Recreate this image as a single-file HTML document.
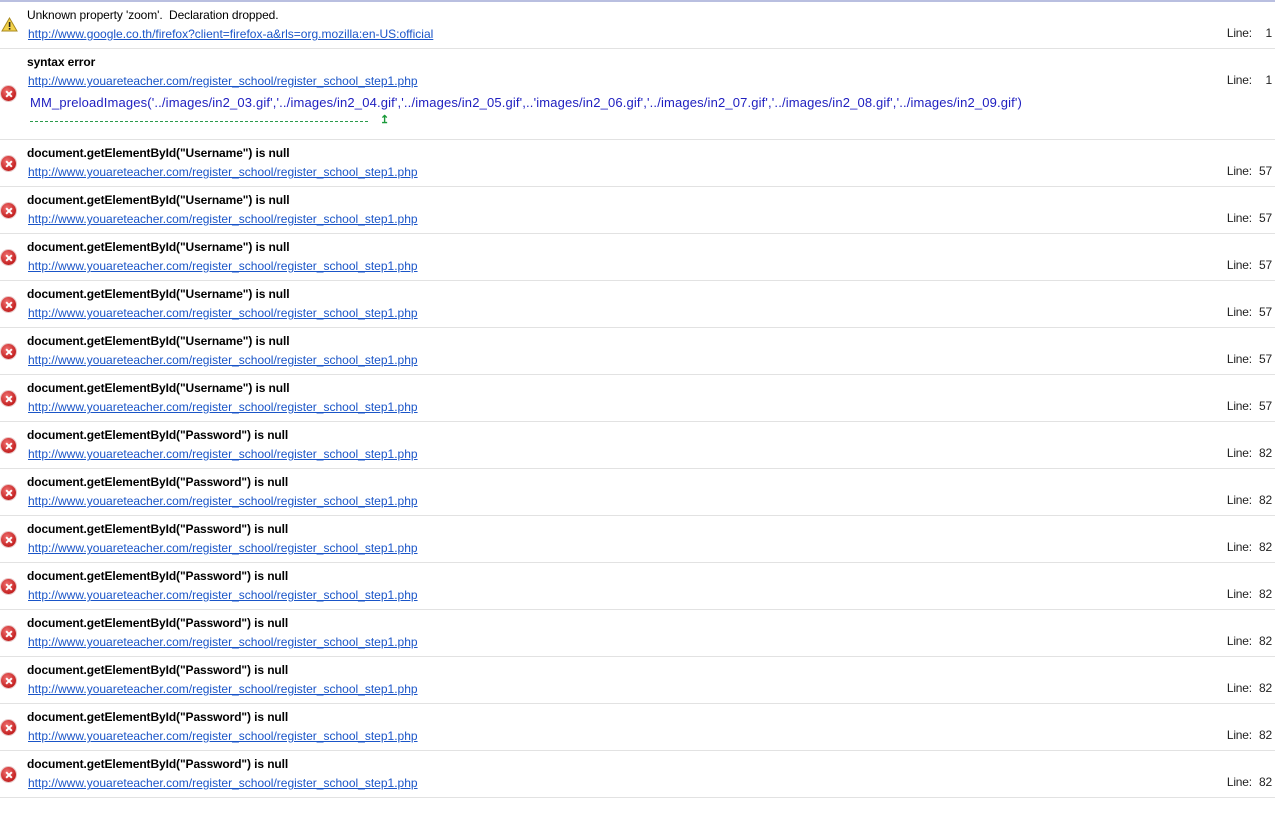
<!DOCTYPE html>
<html><head><meta charset="utf-8"><style>
*{margin:0;padding:0}
body{width:1275px;height:816px;background:#fff;position:relative;overflow:hidden;font-family:"Liberation Sans",Arial,sans-serif;font-size:12px;color:#000}
.top{position:absolute;left:0;top:0;width:1275px;height:2px;background:#b9bfe0}
.row{position:absolute;left:0;width:1275px;border-bottom:1px solid #e2e2e2}
.t{position:absolute;left:27px;white-space:nowrap;letter-spacing:-0.1px}
.b{font-weight:bold}
.a{color:#1a55c8;text-decoration:underline;letter-spacing:0;left:28px}
.ln{position:absolute;right:3px;white-space:nowrap;color:#222;letter-spacing:-0.2px}
.ln span{display:inline-block;width:17px;text-align:right}
.ic{position:absolute;left:1px;width:15px;height:15px;border-radius:50%;background:radial-gradient(circle at 40% 35%,#f07070,#c42020 70%,#a01010);box-shadow:0 0 0 1px #e8c8c8}
.ic:before,.ic:after{content:"";position:absolute;left:6.5px;top:3.5px;width:2px;height:8px;background:#fff;transform:rotate(45deg)}
.ic:after{transform:rotate(-45deg)}
</style></head><body>
<div class="top"></div>

<div class="row" style="top:2px;height:46px">
<svg style="position:absolute;left:1px;top:15px" width="17" height="15" viewBox="0 0 17 15"><path d="M8.5 1 L16 14 L1 14 Z" fill="#f3d24a" stroke="#a88a20" stroke-width="1"/><rect x="7.8" y="5" width="1.6" height="5" fill="#222"/><rect x="7.8" y="11" width="1.6" height="1.6" fill="#222"/></svg>
<div class="t" style="top:6px">Unknown property 'zoom'.&nbsp; Declaration dropped.</div>
<div class="t a" style="top:25px">http://www.google.co.th/firefox?client=firefox-a&amp;rls=org.mozilla:en-US:official</div>
<div class="ln" style="top:24px">Line: <span>1</span></div>
</div>

<div class="row" style="top:49px;height:90px">
<div class="ic" style="top:37px"></div>
<div class="t b" style="top:6px">syntax error</div>
<div class="t a" style="top:25px">http://www.youareteacher.com/register_school/register_school_step1.php</div>
<div class="t" style="top:46px;left:30px;color:#2020c0;font-size:13px;letter-spacing:0.15px">MM_preloadImages('../images/in2_03.gif','../images/in2_04.gif','../images/in2_05.gif',..'images/in2_06.gif','../images/in2_07.gif','../images/in2_08.gif','../images/in2_09.gif')</div>
<div style="position:absolute;left:30px;top:72px;width:338px;border-top:1px dashed #2a9a4a"></div>
<div style="position:absolute;left:380px;top:64px;color:#1a9a3a;font-size:11px;font-weight:bold">&#8613;</div>
<div class="ln" style="top:24px">Line: <span>1</span></div>
</div>

<div class="row" style="top:140px;height:46px"><div class="ic" style="top:16px"></div><div class="t b" style="top:6px">document.getElementById("Username") is null</div><div class="t a" style="top:25px">http://www.youareteacher.com/register_school/register_school_step1.php</div><div class="ln" style="top:24px">Line: <span>57</span></div></div>
<div class="row" style="top:187px;height:46px"><div class="ic" style="top:16px"></div><div class="t b" style="top:6px">document.getElementById("Username") is null</div><div class="t a" style="top:25px">http://www.youareteacher.com/register_school/register_school_step1.php</div><div class="ln" style="top:24px">Line: <span>57</span></div></div>
<div class="row" style="top:234px;height:46px"><div class="ic" style="top:16px"></div><div class="t b" style="top:6px">document.getElementById("Username") is null</div><div class="t a" style="top:25px">http://www.youareteacher.com/register_school/register_school_step1.php</div><div class="ln" style="top:24px">Line: <span>57</span></div></div>
<div class="row" style="top:281px;height:46px"><div class="ic" style="top:16px"></div><div class="t b" style="top:6px">document.getElementById("Username") is null</div><div class="t a" style="top:25px">http://www.youareteacher.com/register_school/register_school_step1.php</div><div class="ln" style="top:24px">Line: <span>57</span></div></div>
<div class="row" style="top:328px;height:46px"><div class="ic" style="top:16px"></div><div class="t b" style="top:6px">document.getElementById("Username") is null</div><div class="t a" style="top:25px">http://www.youareteacher.com/register_school/register_school_step1.php</div><div class="ln" style="top:24px">Line: <span>57</span></div></div>
<div class="row" style="top:375px;height:46px"><div class="ic" style="top:16px"></div><div class="t b" style="top:6px">document.getElementById("Username") is null</div><div class="t a" style="top:25px">http://www.youareteacher.com/register_school/register_school_step1.php</div><div class="ln" style="top:24px">Line: <span>57</span></div></div>
<div class="row" style="top:422px;height:46px"><div class="ic" style="top:16px"></div><div class="t b" style="top:6px">document.getElementById("Password") is null</div><div class="t a" style="top:25px">http://www.youareteacher.com/register_school/register_school_step1.php</div><div class="ln" style="top:24px">Line: <span>82</span></div></div>
<div class="row" style="top:469px;height:46px"><div class="ic" style="top:16px"></div><div class="t b" style="top:6px">document.getElementById("Password") is null</div><div class="t a" style="top:25px">http://www.youareteacher.com/register_school/register_school_step1.php</div><div class="ln" style="top:24px">Line: <span>82</span></div></div>
<div class="row" style="top:516px;height:46px"><div class="ic" style="top:16px"></div><div class="t b" style="top:6px">document.getElementById("Password") is null</div><div class="t a" style="top:25px">http://www.youareteacher.com/register_school/register_school_step1.php</div><div class="ln" style="top:24px">Line: <span>82</span></div></div>
<div class="row" style="top:563px;height:46px"><div class="ic" style="top:16px"></div><div class="t b" style="top:6px">document.getElementById("Password") is null</div><div class="t a" style="top:25px">http://www.youareteacher.com/register_school/register_school_step1.php</div><div class="ln" style="top:24px">Line: <span>82</span></div></div>
<div class="row" style="top:610px;height:46px"><div class="ic" style="top:16px"></div><div class="t b" style="top:6px">document.getElementById("Password") is null</div><div class="t a" style="top:25px">http://www.youareteacher.com/register_school/register_school_step1.php</div><div class="ln" style="top:24px">Line: <span>82</span></div></div>
<div class="row" style="top:657px;height:46px"><div class="ic" style="top:16px"></div><div class="t b" style="top:6px">document.getElementById("Password") is null</div><div class="t a" style="top:25px">http://www.youareteacher.com/register_school/register_school_step1.php</div><div class="ln" style="top:24px">Line: <span>82</span></div></div>
<div class="row" style="top:704px;height:46px"><div class="ic" style="top:16px"></div><div class="t b" style="top:6px">document.getElementById("Password") is null</div><div class="t a" style="top:25px">http://www.youareteacher.com/register_school/register_school_step1.php</div><div class="ln" style="top:24px">Line: <span>82</span></div></div>
<div class="row" style="top:751px;height:46px"><div class="ic" style="top:16px"></div><div class="t b" style="top:6px">document.getElementById("Password") is null</div><div class="t a" style="top:25px">http://www.youareteacher.com/register_school/register_school_step1.php</div><div class="ln" style="top:24px">Line: <span>82</span></div></div>
</body></html>
